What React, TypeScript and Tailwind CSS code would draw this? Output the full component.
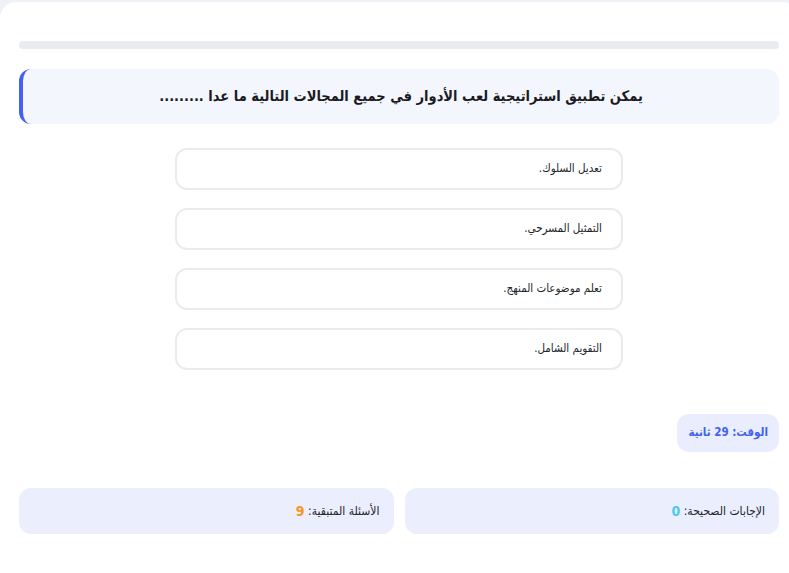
import React from "react";

const options = ["تعديل السلوك.", "التمثيل المسرحي.", "تعلم موضوعات المنهج.", "التقويم الشامل."];

export default function App() {
  return (
    <div
      className="h-[573px] overflow-hidden bg-[#eef1f5] pt-[2px]"
      style={{ fontFamily: '"DejaVu Sans Condensed", "DejaVu Sans", sans-serif' }}
    >
      <div dir="rtl" className="w-[798px] min-h-[590px] rounded-[16px] bg-white px-[19px] pt-[39px]">
        <div className="h-[8px] w-full rounded-full bg-[#e9ecef]" />
        <div className="mt-[20px] flex h-[55px] items-center justify-center rounded-[12px] border-l-[4px] border-[#4361ee] bg-[#f4f6fe]">
          <h2 className="text-[14.5px] font-bold text-[#1b1b1f]">
            يمكن تطبيق استراتيجية لعب الأدوار في جميع المجالات التالية ما عدا .........
          </h2>
        </div>
        <div className="mx-auto mt-[24px] flex w-[448px] flex-col gap-[18px]">
          {options.map((o) => (
            <div
              key={o}
              className="flex h-[42px] items-center rounded-[12px] border-2 border-[#e9ecef] bg-white px-[19px] text-[11.5px] text-[#212529]"
            >
              {o}
            </div>
          ))}
        </div>
        <div className="mt-[44px] flex">
          <div className="flex h-[38px] items-center rounded-[12px] bg-[#eaedfd] px-[11px] text-[11.5px] font-bold text-[#4361ee]">
            الوقت: 29 ثانية
          </div>
        </div>
        <div className="mt-[36px] grid grid-cols-2 gap-[11px]">
          <div className="flex h-[46px] items-center rounded-[12px] bg-[#ebeefd] px-[14px] text-[12px] text-[#212529]">
            الإجابات الصحيحة:&nbsp;<span className="text-[14px] font-bold text-[#4cc9f0]">0</span>
          </div>
          <div className="flex h-[46px] items-center rounded-[12px] bg-[#ebeefd] px-[14px] text-[12px] text-[#212529]">
            الأسئلة المتبقية:&nbsp;<span className="text-[14px] font-bold text-[#f8961e]">9</span>
          </div>
        </div>
      </div>
    </div>
  );
}
